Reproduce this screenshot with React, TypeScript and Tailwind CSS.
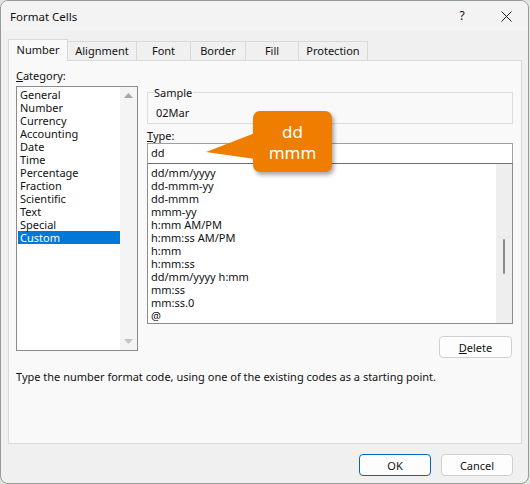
import React from "react";

const categories = [
  "General",
  "Number",
  "Currency",
  "Accounting",
  "Date",
  "Time",
  "Percentage",
  "Fraction",
  "Scientific",
  "Text",
  "Special",
  "Custom",
];

const formats = [
  "dd/mm/yyyy",
  "dd-mmm-yy",
  "dd-mmm",
  "mmm-yy",
  "h:mm AM/PM",
  "h:mm:ss AM/PM",
  "h:mm",
  "h:mm:ss",
  "dd/mm/yyyy h:mm",
  "mm:ss",
  "mm:ss.0",
  "@",
];

const tabs = [
  { label: "Number", w: "w-[60px]", active: true },
  { label: "Alignment", w: "w-[69px]" },
  { label: "Font", w: "w-[54px]" },
  { label: "Border", w: "w-[55px]" },
  { label: "Fill", w: "w-[53px]" },
  { label: "Protection", w: "w-[69px]" },
];

export default function App() {
  return (
    <div className="relative w-[530px] h-[484px] overflow-hidden bg-[#dfe6e0] text-[11px] text-[#111] font-['Noto_Sans','Open_Sans',sans-serif]">
      {/* dialog window */}
      <div className="flex flex-col w-[529px] h-[484px] rounded-[8px] border border-[#9a9a9a] bg-[#f0f0f0] overflow-hidden">
        {/* title bar */}
        <div className="flex items-center h-[30px] pl-[9px] bg-[#f3f3f3]">
          <span className="text-[11.5px] leading-[15px]">Format Cells</span>
          <span className="ml-auto w-[20px] text-center text-[12px]">?</span>
          <svg className="ml-[29px] mr-[16px]" width="11" height="11" viewBox="0 0 11 11">
            <path d="M0.5 0.5 L10.5 10.5 M10.5 0.5 L0.5 10.5" stroke="#1a1a1a" strokeWidth="1" />
          </svg>
        </div>

        {/* tabs */}
        <div className="flex items-end h-[22px] mt-[7px] ml-[7px]">
          {tabs.map((t) =>
            t.active ? (
              <div
                key={t.label}
                className={`${t.w} h-[22px] -mb-px flex items-center justify-center border border-b-0 border-[#d9d9d9] bg-[#f9f9f9] relative z-10`}
              >
                {t.label}
              </div>
            ) : (
              <div
                key={t.label}
                className={`${t.w} h-[19px] flex items-center justify-center border border-b-0 border-l-0 border-[#d9d9d9] bg-[#f0f0f0]`}
              >
                {t.label}
              </div>
            )
          )}
        </div>

        {/* panel */}
        <div className="ml-[7px] w-[514px] h-[384px] border border-[#d9d9d9] bg-[#f9f9f9] pl-[7px] pt-[7px]">
          <div className="flex gap-[9px]">
            {/* category */}
            <div className="flex flex-col w-[122px]">
              <div className="leading-[15px] h-[15px]">
                <span className="underline">C</span>ategory:
              </div>
              <div className="mt-[3px] h-[265px] flex border border-[#8c8c8c] bg-white">
                <div className="flex-1 pt-[1px] pl-[1px]">
                  {categories.map((c) => (
                    <div
                      key={c}
                      className={`h-[13px] leading-[13px] pl-[2px] ${
                        c === "Custom" ? "bg-[#0078d7] text-white" : ""
                      }`}
                    >
                      {c}
                    </div>
                  ))}
                </div>
                <div className="w-[17px] bg-[#f4f4f4] flex flex-col items-center justify-between py-[6px]">
                  <svg width="9" height="5" viewBox="0 0 9 5">
                    <path d="M0 5 L4.5 0 L9 5 Z" fill="#a6a6a6" />
                  </svg>
                  <svg width="9" height="5" viewBox="0 0 9 5">
                    <path d="M0 0 L4.5 5 L9 0 Z" fill="#c4c4c4" />
                  </svg>
                </div>
              </div>
            </div>

            {/* type */}
            <div className="flex flex-col w-[366px]">
              <fieldset className="h-[39px] mt-[17px] border border-[#dcdcdc] pl-[5px]">
                <legend className="px-[1px] leading-[15px]">Sample</legend>
                <div className="pl-[3px] pt-[5px] leading-[15px]">02Mar</div>
              </fieldset>
              <div className="mt-[4px] leading-[15px] h-[15px]">
                <span className="underline">T</span>ype:
              </div>
              <div className="h-[20px] border border-b-0 border-[#a0a0a0] bg-white flex items-center pl-[3px]">
                dd
              </div>
              <div className="h-[161px] flex border border-[#8c8c8c] border-t-[#6e6e6e] bg-white">
                <div className="flex-1 pt-[2px] pl-[3px]">
                  {formats.map((f) => (
                    <div key={f} className="h-[13px] leading-[13px]">
                      {f}
                    </div>
                  ))}
                </div>
                <div className="w-[16px] bg-[#eeeeee] flex justify-center pt-[75px]">
                  <div className="w-[2px] h-[35px] rounded-full bg-[#8a8a8a]" />
                </div>
              </div>
              <button className="mt-[12px] self-end mr-[1px] w-[73px] h-[22px] rounded-[4px] border border-[#d0d0d0] bg-[#fdfdfd] leading-[15px]">
                <span className="underline">D</span>elete
              </button>
            </div>
          </div>

          <div className="mt-[11px] leading-[15px]">
            Type the number format code, using one of the existing codes as a starting point.
          </div>
        </div>

        {/* buttons */}
        <div className="flex justify-end gap-[10px] mt-[10px] pr-[15px]">
          <button className="w-[72px] h-[22px] rounded-[4px] border border-[#0067c0] bg-[#fdfdfd] leading-[15px]">
            OK
          </button>
          <button className="w-[72px] h-[22px] rounded-[4px] border border-[#d0d0d0] bg-[#fdfdfd] leading-[15px]">
            Cancel
          </button>
        </div>
      </div>

      {/* callout */}
      <div className="absolute left-[253px] top-[111px] w-[79px] h-[61px] rounded-[7px] bg-[#ee7d00] shadow-[2px_3px_4px_rgba(0,0,0,0.35)] flex flex-col items-center justify-center text-white text-[17px] leading-[21px] font-['Noto_Sans',sans-serif]">
        <svg className="absolute left-[-47px] top-[22px]" width="49" height="26" viewBox="0 0 49 26">
          <path d="M0 19 L49 0 L49 26 Z" fill="#ee7d00" />
        </svg>
        <span className="relative">dd</span>
        <span className="relative">mmm</span>
      </div>
    </div>
  );
}
